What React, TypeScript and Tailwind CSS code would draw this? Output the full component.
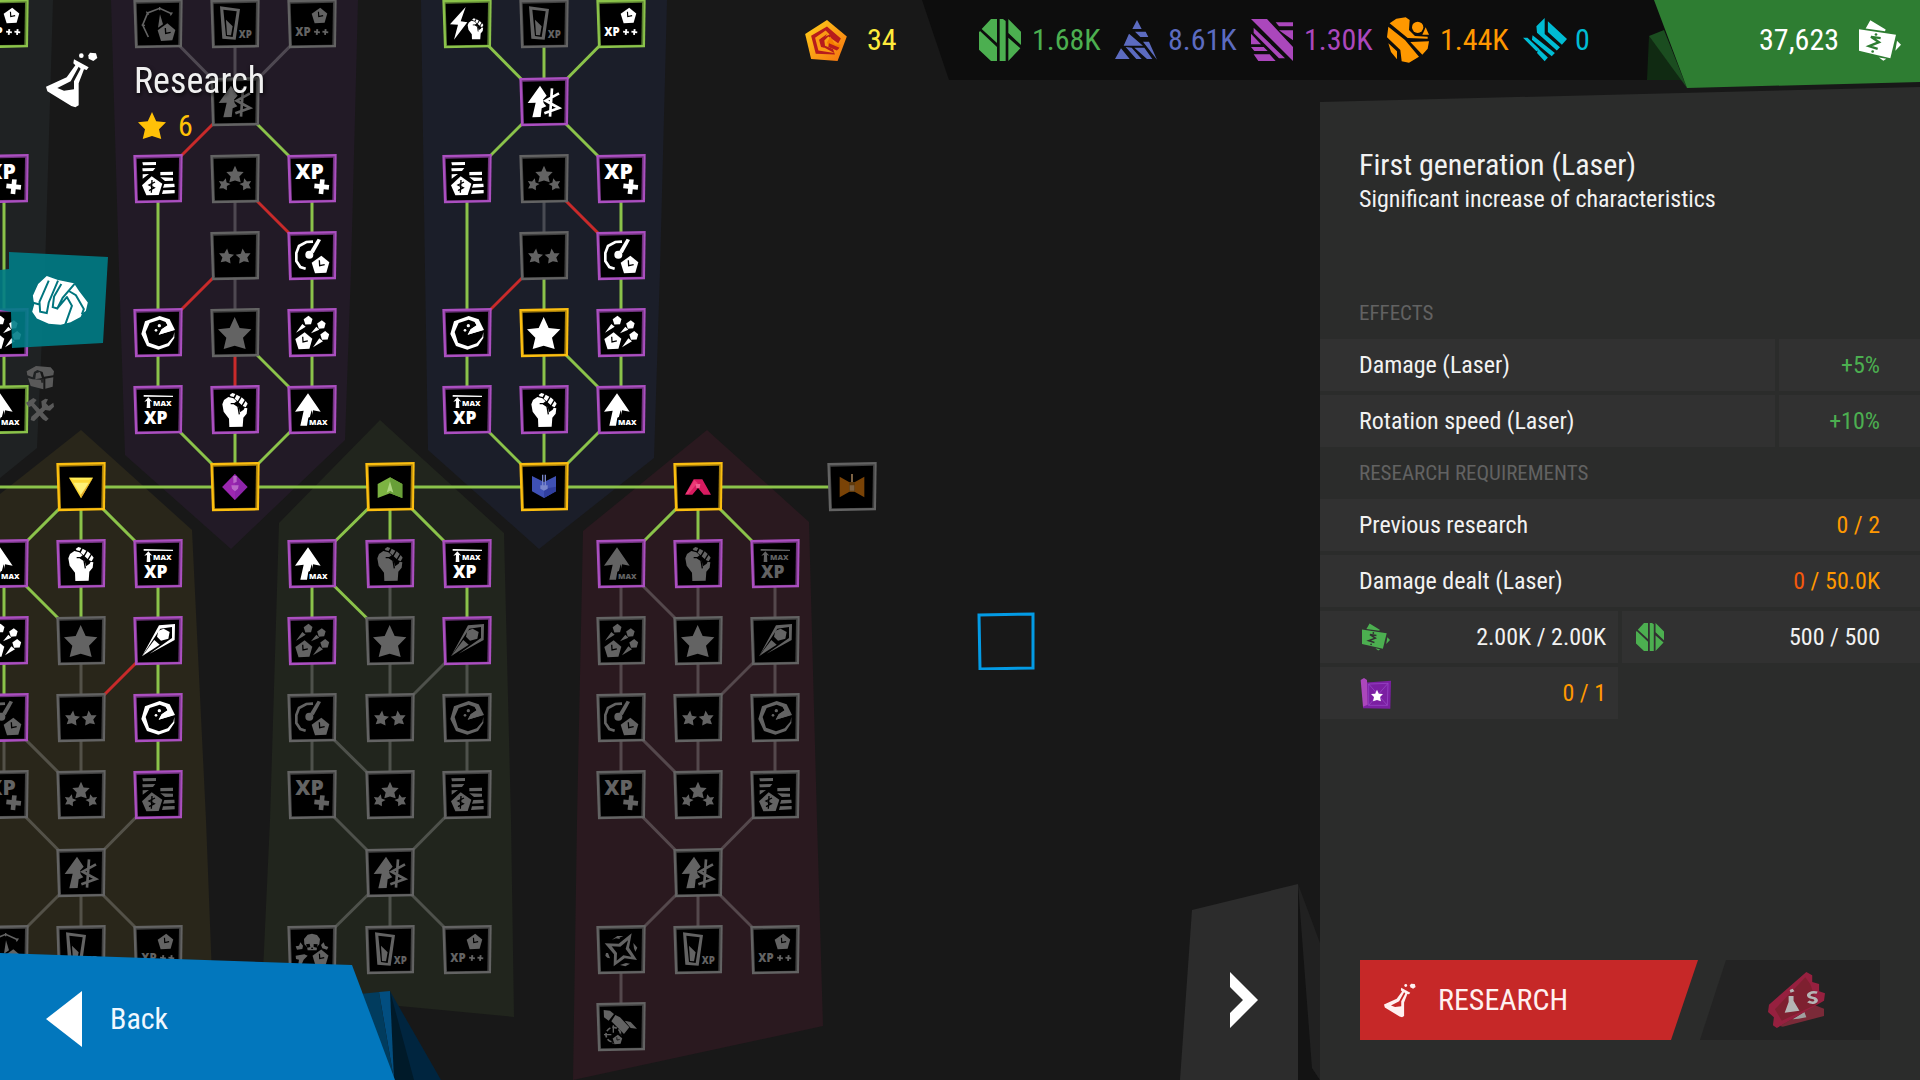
import type { ReactNode } from "react";

type Tone = "gray" | "purple" | "yellow" | "green";
type Link = [number, number, number, number, "g" | "r" | "d"];
type NodeDef = { c: number; r: number; icon: string; tone: Tone; lit?: boolean };

const STEP = 77.1;
const px = (c: number) => Math.round(4 + STEP * c);
const py = (r: number) => Math.round(487 + STEP * r);

const TONES: Record<Tone, string> = {
  gray: "#636363",
  purple: "#ab4fc0",
  yellow: "#fcbf10",
  green: "#8bc34a",
};

const STAR = "M0 -50 L15 -17 L50 -13 L25 12 L33 46 L0 36 L-33 46 L-25 12 L-50 -13 L-15 -17Z";
const PENTA = "M3 -26 L27 -6 L18 25 L-16 27 L-26 -5Z";

function Clock({ x, y, s = 1 }: { x: number; y: number; s?: number }) {
  return (
    <g transform={`translate(${x} ${y}) scale(${s})`}>
      <path d={PENTA} />
      <path d="M-3 -12 L-2 4 L13 1" fill="none" stroke="#000" strokeWidth="4" />
    </g>
  );
}

function Fist() {
  return (
    <g>
      <path d="M37 58 L42 45 L55 36 L70 40 L80 49 L70 56 L86 65 L90 82 L101 74 L104 68 L112 70 L110 86 L100 98 L98 125 L58 126 L57 101 L41 80Z" />
      <path d="M62 56 L72 56 L84 64 L88 88" fill="none" stroke="#000" strokeWidth="4" />
      <path d="M59 30 L67 24 L76 27 L71 36 L62 34Z M80 29 L91 35 L83 49 L74 41Z M95 37 L104 45 L95 60 L86 52Z M107 48 L113 56 L107 67 L98 63Z" />
    </g>
  );
}

function Label({ x, y, size, children }: { x: number; y: number; size: number; children: string }) {
  return (
    <text x={x} y={y} fontSize={size} fontWeight={800} fontFamily='"Open Sans", "Noto Sans", sans-serif'>
      {children}
    </text>
  );
}

function Plus({ x, y, s }: { x: number; y: number; s: number }) {
  return (
    <path
      transform={`translate(${x} ${y}) scale(${s}) rotate(6)`}
      d="M-7 -22 L7 -22 L7 -7 L22 -7 L22 7 L7 7 L7 22 L-7 22 L-7 7 L-22 7 L-22 -7 L-7 -7Z"
    />
  );
}

const GLYPHS: Record<string, ReactNode> = {
  star: <path d={STAR} transform="translate(74 77)" />,
  star2: (
    <g>
      <path d={STAR} transform="translate(49 75) scale(.45) rotate(6)" />
      <path d={STAR} transform="translate(100 75) scale(.45) rotate(-6)" />
    </g>
  ),
  star3: (
    <g>
      <path d={STAR} transform="translate(75 61) scale(.52)" />
      <path d={STAR} transform="translate(43 90) scale(.36) rotate(14)" />
      <path d={STAR} transform="translate(107 90) scale(.36) rotate(-14)" />
    </g>
  ),
  fist: <Fist />,
  power: (
    <g>
      <path d="M71 24 L24 76 L48 77 L36 122 L76 70 L56 67Z" />
      <g transform="translate(54 43) scale(.62)">
        <Fist />
      </g>
    </g>
  ),
  coins: (
    <g>
      <path d="M28 25 L69 24 L69 33 L30 34Z M28 43 L67 42 L60 51 L29 52Z M29 61 L48 60 L29 74Z" />
      <path d="M82 54 L120 53 L120 63 L82 64Z M82 70 L120 71 L120 80 L96 81Z M94 90 L124 89 L125 99 L90 101Z M90 109 L125 108 L125 118 L87 120Z" />
      <path d="M56 67 L88 89 L77 123 L40 124 L27 94Z" />
      <path d="M66 84 L48 93 L64 101 L48 110 M57 78 L55 116" fill="none" stroke="#000" strokeWidth="4" />
    </g>
  ),
  xpplus: (
    <g>
      <Label x={25} y={75} size={63}>XP</Label>
      <Plus x={104} y={98} s={1} />
    </g>
  ),
  maxxp: (
    <g>
      <path d="M32 30 L120 32 L120 36 L32 35Z" />
      <path d="M46 37 L58 50 L51 48 L52 69 L41 69 L42 48 L34 50Z" />
      <Label x={60} y={63} size={23}>MAX</Label>
      <Label x={33} y={118} size={52}>XP</Label>
    </g>
  ),
  upmax: (
    <g>
      <path d="M63 25 L101 80 L78 76 L76 92 L64 98 L60 122 L40 122 L50 77 L24 80Z" />
      <path d="M74 76 L82 106 L66 106Z" fill="#000" />
      <Label x={66} y={120} size={23}>MAX</Label>
    </g>
  ),
  bite: (
    <g>
      <path d="M80 24 L110 34 L126 66 L77 80 L86 64 L104 52 L98 42 L80 35 L50 45 L38 72 L48 104 L78 115 L104 106 L121 86 L124 72 L124 90 L108 114 L76 125 L42 114 L25 78 L36 40Z" />
      <path d="M98 42 L104 52 L86 64 L77 80 L122 66 L110 38Z" />
      <circle cx="79" cy="53" r="5" />
      <circle cx="69" cy="67" r="4" />
    </g>
  ),
  gauge: (
    <g>
      <path d="M78 32 L58 33 L36 45 L28 66 L28 90 L40 108 L56 113" fill="none" stroke="currentColor" strokeWidth="8" />
      <path d="M102 27 L92 23 L70 60 L80 67Z" />
      <circle cx="67" cy="71" r="12" />
      <Clock x={100} y={100} />
    </g>
  ),
  volley: (
    <g>
      <path d={PENTA} transform="translate(63 36) scale(.5)" />
      <path d={PENTA} transform="translate(103 49) scale(.48)" />
      <path d={PENTA} transform="translate(113 82) scale(.5)" />
      <path d="M27 74 L46 48 L56 56Z M72 76 L88 56 L97 65Z M78 118 L97 91 L108 100Z" />
      <Clock x={50} y={98} s={0.96} />
    </g>
  ),
  spear: (
    <g>
      <path d="M126 24 L78 28 L27 121 L82 38 L117 33 L117 66 L50 113 L125 72Z" />
      <path d="M92 38 L110 48 L106 68 L84 74 L72 62 L76 44Z" />
      <path d="M27 121 L64 72 L80 86Z" />
    </g>
  ),
  trade: (
    <g>
      <path d="M63 26 L83 56 L72 68 L74 78 L82 88 L68 94 L65 120 L40 121 L50 77 L26 78Z" />
      <path d="M120 49 L80 71 L120 93 L76 109 M99 34 L93 119" fill="none" stroke="currentColor" strokeWidth="8" />
    </g>
  ),
  glass: (
    <g>
      <path d="M30 22 L90 30 L77 122 L37 119Z M40 32 L48 111 L68 114 L80 37Z" fillRule="evenodd" />
      <path d="M48 62 L68 82 L63 109 L51 108Z" />
      <Label x={86} y={116} size={29}>XP</Label>
    </g>
  ),
  xppp: (
    <g>
      <Clock x={97} y={49} s={0.88} />
      <Label x={25} y={110} size={34}>XP</Label>
      <Plus x={90} y={99} s={0.4} />
      <Plus x={115} y={99} s={0.4} />
    </g>
  ),
  timer: (
    <g>
      <path d="M46 114 L29 78 L44 42 L80 28 L116 44" fill="none" stroke="currentColor" strokeWidth="5" />
      <path d="M26 78 L36 79 M40 38 L47 47 M80 24 L80 34 M118 40 L112 49" fill="none" stroke="currentColor" strokeWidth="4" />
      <path d="M81 46 L90 76 L75 86Z" />
      <Clock x={100} y={99} />
    </g>
  ),
  skull: (
    <g>
      <path d="M62 29 L75 26 L90 30 L99 42 L97 58 L90 66 L89 76 L62 76 L60 66 L52 58 L51 42Z" />
      <path d="M57 58 L68 56 L70 66 L61 68Z M80 57 L92 58 L90 68 L80 66Z M75 66 L79 72 L72 72Z" fill="#000" />
      <path d="M40 52 L48 62 L46 72 L30 74 L26 64 L36 62Z M110 52 L102 60 L106 70 L120 74 L124 66 L114 62Z M26 92 L52 88 L62 92 L50 104 L44 118 L34 116 L36 104 L27 102Z" />
      <Clock x={100} y={97} s={0.9} />
    </g>
  ),
  swirl: (
    <g>
      <path
        d="M107 25 L99 68 L123 105 L86 100 L53 124 L54 88 L26 55 L68 56Z M96 46 L73 65 L47 64 L63 84 L62 107 L82 91 L106 95 L89 72Z"
        fillRule="evenodd"
      />
      <path d="M48 44 L64 33 L82 33 L70 38 L72 42 L60 40Z M112 54 L124 68 L118 80 L114 70Z M36 84 L42 100 L34 98 L28 92 L30 84Z M72 120 L90 114 L102 116 L88 124Z" />
    </g>
  ),
  rocket: (
    <g>
      <path d="M23 24 L42 26 L54 36 L38 56 L24 46Z M58 39 L72 46 L100 76 L84 96 L46 58Z M86 56 L104 60 L123 80 L104 78Z" />
      <circle cx="52" cy="98" r="22" fill="none" stroke="currentColor" strokeWidth="5" strokeDasharray="14 6" />
      <path d="M52 70 L52 92 M24 98 L46 98 M52 104 L52 126" stroke="currentColor" strokeWidth="4" />
      <circle cx="64" cy="112" r="17" fill="#000" />
      <Clock x={64} y={112} s={0.54} />
    </g>
  ),
  gemYellow: (
    <g>
      <path d="M39 47 L111 47 L75 109Z" fill="#fdd835" />
      <path d="M39 47 L111 47 L98 53 L52 53Z" fill="#ffee58" />
      <path d="M52 62 L98 62 L75 98Z" fill="#fff176" />
      <path d="M111 47 L75 109 L75 98Z" fill="#e0a82e" />
    </g>
  ),
  gemPurple: (
    <g>
      <path d="M75 36 L113 75 L75 114 L37 75Z" fill="#8e24aa" />
      <path d="M75 36 L75 114 L37 75Z" fill="#9c27b0" />
      <path d="M70 42 L80 42 L80 60 L70 64Z M64 70 L86 70 L84 80 L75 88 L66 80Z" fill="#ba68c8" />
    </g>
  ),
  gemGreen: (
    <g>
      <path d="M75 46 L112 66 L112 108 L75 94 L38 108 L38 66Z" fill="#7cb342" />
      <path d="M75 46 L112 66 L112 108 L75 94Z" fill="#689f38" />
      <path d="M75 58 L85 92 L75 86 L65 92Z" fill="#aed581" />
    </g>
  ),
  gemBlue: (
    <g>
      <path d="M39 42 L75 60 L111 42 L111 88 L75 108 L39 88Z" fill="#3f51b5" />
      <path d="M75 80 L111 74 L111 88 L75 108Z" fill="#303f9f" />
      <path d="M71 38 L71 72 M79 38 L79 72" stroke="#7986cb" strokeWidth="4" />
      <path d="M64 70 L86 70 L86 80 L75 86 L64 80Z" fill="#7986cb" />
    </g>
  ),
  gemPink: (
    <g>
      <path d="M62 52 L88 52 L114 98 L92 98 L75 78 L58 98 L36 98Z" fill="#d81b60" />
      <path d="M64 54 L75 64 L66 72 L46 96 L38 96Z" fill="#ec3a76" />
      <path d="M68 66 L82 66 L80 78 L70 78Z" fill="#f06292" />
    </g>
  ),
  gemBrown: (
    <g>
      <path d="M38 44 L66 60 L84 60 L112 44 L112 106 L84 90 L66 90 L38 106Z" fill="#7a4306" />
      <path d="M66 60 L84 60 L84 90 L66 90Z" fill="#5f3a0c" />
      <path d="M72 36 L78 36 L78 60 L72 60Z M68 70 L82 70 L82 86 L68 86Z" fill="#7d6243" />
    </g>
  ),
};

const n = (c: number, r: number, icon: string, tone: Tone = "gray", lit = false): NodeDef => ({ c, r, icon, tone, lit });

const NODES: NodeDef[] = [
  n(0, -6, "xppp", "green", true), n(0, -4, "xpplus", "purple", true), n(0, -2, "volley", "purple", true), n(0, -1, "upmax", "green", true),
  n(2, -6, "timer"), n(3, -6, "glass"), n(4, -6, "xppp"),
  n(3, -5, "trade"),
  n(2, -4, "coins", "purple", true), n(3, -4, "star3"), n(4, -4, "xpplus", "purple", true),
  n(3, -3, "star2"), n(4, -3, "gauge", "purple", true),
  n(2, -2, "bite", "purple", true), n(3, -2, "star"), n(4, -2, "volley", "purple", true),
  n(2, -1, "maxxp", "purple", true), n(3, -1, "fist", "purple", true), n(4, -1, "upmax", "purple", true),
  n(6, -6, "power", "green", true), n(7, -6, "glass"), n(8, -6, "xppp", "green", true),
  n(7, -5, "trade", "purple", true),
  n(6, -4, "coins", "purple", true), n(7, -4, "star3"), n(8, -4, "xpplus", "purple", true),
  n(7, -3, "star2"), n(8, -3, "gauge", "purple", true),
  n(6, -2, "bite", "purple", true), n(7, -2, "star", "yellow", true), n(8, -2, "volley", "purple", true),
  n(6, -1, "maxxp", "purple", true), n(7, -1, "fist", "purple", true), n(8, -1, "upmax", "purple", true),
  n(1, 0, "gemYellow", "yellow"), n(3, 0, "gemPurple", "yellow"), n(5, 0, "gemGreen", "yellow"),
  n(7, 0, "gemBlue", "yellow"), n(9, 0, "gemPink", "yellow"), n(11, 0, "gemBrown"),
  n(0, 1, "upmax", "purple", true), n(1, 1, "fist", "purple", true), n(2, 1, "maxxp", "purple", true),
  n(0, 2, "volley", "purple", true), n(1, 2, "star"), n(2, 2, "spear", "purple", true),
  n(0, 3, "gauge", "purple"), n(1, 3, "star2"), n(2, 3, "bite", "purple", true),
  n(0, 4, "xpplus"), n(1, 4, "star3"), n(2, 4, "coins", "purple"),
  n(1, 5, "trade"), n(0, 6, "timer"), n(1, 6, "glass"), n(2, 6, "xppp"),
  n(4, 1, "upmax", "purple", true), n(5, 1, "fist", "purple"), n(6, 1, "maxxp", "purple", true),
  n(4, 2, "volley", "purple"), n(5, 2, "star"), n(6, 2, "spear", "purple"),
  n(4, 3, "gauge"), n(5, 3, "star2"), n(6, 3, "bite"),
  n(4, 4, "xpplus"), n(5, 4, "star3"), n(6, 4, "coins"),
  n(5, 5, "trade"), n(4, 6, "skull"), n(5, 6, "glass"), n(6, 6, "xppp"),
  n(8, 1, "upmax", "purple"), n(9, 1, "fist", "purple"), n(10, 1, "maxxp", "purple"),
  n(8, 2, "volley"), n(9, 2, "star"), n(10, 2, "spear"),
  n(8, 3, "gauge"), n(9, 3, "star2"), n(10, 3, "bite"),
  n(8, 4, "xpplus"), n(9, 4, "star3"), n(10, 4, "coins"),
  n(9, 5, "trade"), n(8, 6, "swirl"), n(9, 6, "glass"), n(10, 6, "xppp"), n(8, 7, "rocket"),
];

const LINKS: Link[] = [
  [-1, 0, 11, 0, "g"], [0, -4, 0, -1, "g"], [0, -6, -1, -5, "g"],
  [2, -6, 3, -5, "d"], [3, -6, 3, -5, "d"], [4, -6, 3, -5, "d"], [3, -5, 2, -4, "r"], [3, -5, 4, -4, "g"],
  [2, -4, 2, -1, "g"], [4, -4, 4, -1, "g"], [3, -4, 3, -2, "d"], [3, -4, 4, -3, "r"], [3, -3, 2, -2, "r"],
  [3, -2, 3, -1, "r"], [3, -2, 4, -1, "g"], [2, -1, 3, 0, "g"], [3, -1, 3, 0, "g"], [4, -1, 3, 0, "g"],
  [6, -6, 7, -5, "g"], [7, -6, 7, -5, "g"], [8, -6, 7, -5, "g"], [7, -5, 6, -4, "g"], [7, -5, 8, -4, "g"],
  [6, -4, 6, -1, "g"], [8, -4, 8, -1, "g"], [7, -4, 7, -3, "d"], [7, -3, 7, -1, "g"], [7, -4, 8, -3, "r"],
  [7, -3, 6, -2, "r"], [7, -2, 8, -1, "g"], [6, -1, 7, 0, "g"], [7, -1, 7, 0, "g"], [8, -1, 7, 0, "g"],
  [1, 0, 0, 1, "g"], [1, 0, 1, 2, "g"], [1, 0, 2, 1, "g"], [0, 1, 0, 3, "g"], [0, 1, 1, 2, "g"], [2, 1, 2, 4, "g"],
  [2, 2, 1, 3, "r"], [1, 2, 1, 4, "d"], [0, 3, 0, 4, "d"], [0, 3, 1, 4, "d"], [0, 4, 1, 5, "d"], [2, 4, 1, 5, "d"],
  [1, 5, 0, 6, "d"], [1, 5, 1, 6, "d"], [1, 5, 2, 6, "d"],
  [5, 0, 4, 1, "g"], [5, 0, 5, 1, "g"], [5, 0, 6, 1, "g"], [4, 1, 4, 2, "g"], [4, 1, 5, 2, "g"], [6, 1, 6, 2, "g"],
  [5, 1, 5, 4, "d"], [4, 2, 4, 4, "d"], [6, 2, 6, 4, "d"], [6, 2, 5, 3, "d"], [4, 3, 5, 4, "d"],
  [4, 4, 5, 5, "d"], [6, 4, 5, 5, "d"], [5, 5, 4, 6, "d"], [5, 5, 5, 6, "d"], [5, 5, 6, 6, "d"],
  [9, 0, 8, 1, "g"], [9, 0, 9, 1, "g"], [9, 0, 10, 1, "g"], [8, 1, 8, 4, "d"], [8, 1, 9, 2, "d"], [9, 1, 9, 4, "d"],
  [10, 1, 10, 4, "d"], [10, 2, 9, 3, "d"], [8, 3, 9, 4, "d"], [8, 4, 9, 5, "d"], [10, 4, 9, 5, "d"],
  [9, 5, 8, 6, "d"], [9, 5, 9, 6, "d"], [9, 5, 10, 6, "d"], [8, 6, 8, 7, "d"],
];

const LINK_COLOR = { g: "#8bc34a", r: "#c92a2a", d: "rgba(200,200,200,0.27)" };

const REGIONS: [string, string][] = [
  ["0,0 53,0 45,270 37,448 0,478", "#1f2223"],
  ["111,0 358,0 351,270 345,440 231,549 125,455 119,270", "#221a26"],
  ["421,0 667,0 660,270 654,458 539,549 428,450 425,270", "#1b1e29"],
  ["81,430 192,530 206,820 216,1080 0,1080 0,494", "#29261a"],
  ["380,420 504,533 511,820 514,1017 262,993 270,820 279,523", "#21251d"],
  ["707,430 809,522 817,820 823,1026 573,1080 577,820 583,531", "#2a191f"],
];

function TreeNode({ node }: { node: NodeDef }) {
  return (
    <button
      className="absolute size-[50px] cursor-pointer"
      aria-label={node.icon}
      style={{ left: px(node.c) - 25, top: py(node.r) - 25 }}
    >
      <svg viewBox="0 0 150 150" className="size-full">
        <path d="M1 3 L149 0 L147 145 L6 148Z" fill={TONES[node.tone]} />
        <path d="M8 10 L143 7 L141 138 L13 141Z" fill="#000" fillOpacity="0.35" />
        <path d="M11 14 L138 11 L136 137 L15 139Z" fill="#000" />
        <g className={node.lit ? "text-white" : "text-[#636363]"} fill="currentColor">
          {GLYPHS[node.icon]}
        </g>
      </svg>
    </button>
  );
}

function ResearchTree() {
  return (
    <div className="absolute inset-0 overflow-hidden">
      <svg className="absolute left-0 top-0 h-[1080px] w-[1320px]" viewBox="0 0 1320 1080">
        {REGIONS.map(([points, fill]) => (
          <polygon key={points} points={points} fill={fill} />
        ))}
        {LINKS.map(([a, b, c, d, k]) => (
          <line key={`${a},${b},${c},${d}`} x1={px(a)} y1={py(b)} x2={px(c)} y2={py(d)} stroke={LINK_COLOR[k]} strokeWidth="3" />
        ))}
      </svg>
      {NODES.map((node) => (
        <TreeNode key={`${node.c},${node.r}`} node={node} />
      ))}
      <button
        aria-label="Selected research"
        className="absolute size-[58px]"
        style={{ left: px(13) - 29, top: py(2) - 29 }}
      >
        <svg viewBox="0 0 58 58" className="size-full">
          <path d="M2 3 L56 2 L56 56 L3 57Z" fill="none" stroke="#039be5" strokeWidth="3" />
        </svg>
      </button>
    </div>
  );
}

function FlaskIcon({ className }: { className: string }) {
  return (
    <svg viewBox="0 0 156 168" className={className} fill="currentColor">
      <path
        fillRule="evenodd"
        d="M84 22 L128 46 L122 54 L114 52 L98 94 L98 160 L88 166 L76 162 L4 118 L0 104 L62 76 L88 40 L82 34Z M98 44 L74 88 L34 108 L54 116 L84 112 L84 88 L104 50Z"
      />
      <circle cx="106" cy="11" r="7" />
      <path d="M132 2 L150 4 L154 18 L142 27 L128 20 L127 10Z" />
    </svg>
  );
}

function CashIcon({ className, ink }: { className: string; ink: string }) {
  return (
    <svg viewBox="0 0 126 122" className={className} fill="currentColor">
      <path d="M34 0 L80 28 L78 33 L20 25Z M114 62 L126 74 L109 92Z M60 112 L82 116 L73 122Z" />
      <path d="M0 27 L111 44 L94 114 L0 92Z" />
      <path d="M65 54 L36 50 L60 66 L30 78 L56 86" fill="none" stroke={ink} strokeWidth="7" />
      <circle cx="51" cy="43" r="4" fill={ink} />
      <circle cx="41" cy="94" r="4" fill={ink} />
    </svg>
  );
}

function GreenOre({ className }: { className: string }) {
  return (
    <svg viewBox="0 0 126 126" className={className} fill="currentColor">
      <path d="M36 0 L54 0 L54 72 L8 30Z M3 36 L54 84 L54 126 L36 126 L0 92 L0 40Z M62 0 L72 0 L80 6 L80 126 L62 126Z M88 0 L126 38 L126 78 L88 42Z M88 56 L124 88 L88 126Z" />
    </svg>
  );
}

const CURRENCIES: { amount: string; color: string; icon: ReactNode }[] = [
  { amount: "1.68K", color: "text-[#4caf50]", icon: <GreenOre className="size-[42px]" /> },
  {
    amount: "8.61K",
    color: "text-[#5c6bc0]",
    icon: (
      <svg viewBox="0 0 126 126" className="size-[42px]" fill="currentColor">
        <path d="M66 3 L80 30 L52 30Z M60 38 L92 38 L100 54 L76 54Z M42 44 L84 80 L26 80Z M84 68 L102 68 L126 122Z M58 86 L88 86 L112 120 L96 120Z M32 84 L50 86 L80 120 L64 120Z M18 88 L44 120 L0 120Z" />
      </svg>
    ),
  },
  {
    amount: "1.30K",
    color: "text-[#ab47bc]",
    icon: (
      <svg viewBox="0 0 126 126" className="size-[42px]" fill="currentColor">
        <path d="M0 0 L48 0 L126 84 L126 126Z M8 26 L102 118 L84 118 L8 42Z M0 44 L30 76 L0 76Z M0 84 L38 84 L50 96 L10 96Z M8 106 L56 106 L74 126 L22 126Z M74 10 L126 10 L126 22 L84 22Z M84 34 L126 34 L126 64Z" />
      </svg>
    ),
  },
  {
    amount: "1.44K",
    color: "text-[#ff9800]",
    icon: (
      <svg viewBox="0 0 126 136" className="h-[46px] w-[42px]" fill="currentColor">
        <path d="M56 0 L68 8 L66 38 L84 56 L122 58 L122 64 L62 62 L8 18 L28 4Z M4 28 L54 68 L96 118 L66 136 L44 132 L40 98 L0 60Z M70 74 L126 72 L122 94 L106 112Z M4 78 L30 102 L30 126 L12 104Z" />
        <path d="M116 30 L126 52 L106 52Z" />
        <circle cx="92" cy="30" r="17" />
      </svg>
    ),
  },
  {
    amount: "0",
    color: "text-[#00bcd4]",
    icon: (
      <svg viewBox="0 0 138 138" className="size-[44px]" fill="currentColor">
        <path d="M68 0 L68 50 L116 92 L106 102 L44 46 L42 26Z M78 10 L138 66 L122 84 L78 44Z M30 54 L100 110 L90 120 L28 68Z M0 62 L14 62 L52 98 L42 104Z M48 96 L78 124 L68 136 L44 110Z" />
      </svg>
    ),
  },
];

function TopBar() {
  return (
    <header className="relative z-10 flex h-[87px] items-start justify-between text-[30px] leading-9">
      <div className="flex items-start pl-[46px] pt-[52px]">
        <FlaskIcon className="h-[56px] w-[52px] text-white" />
        <div className="ml-9 flex flex-col">
          <h1 className="text-[36px] leading-[58px] text-[#f0f0f0] drop-shadow-[1px_2px_2px_rgba(0,0,0,0.8)]">Research</h1>
          <div className="-mt-[2px] flex items-center gap-3 pl-1 text-[#ffc107]">
            <svg viewBox="-50 -50 100 100" className="size-[28px]" fill="currentColor">
              <path d={STAR} />
            </svg>
            <span>6</span>
          </div>
        </div>
      </div>
      <div className="flex items-start">
        <div className="flex h-20 w-[117px] items-center gap-5 text-[#ffeb3b]">
          <svg viewBox="0 0 126 124" className="h-[41px] w-[42px]">
            <defs>
              <linearGradient id="gem" x1="0" y1="0" x2="1" y2="1">
                <stop offset="0" stopColor="#ffd21a" />
                <stop offset="1" stopColor="#f57010" />
              </linearGradient>
            </defs>
            <path d="M66 0 L126 50 L98 124 L18 118 L0 42Z" fill="url(#gem)" />
            <path d="M66 20 L108 56 L100 70 L70 50 L58 62 L60 78 L84 88 L90 104 L32 102 L18 48Z" fill="#b71c1c" />
            <path d="M62 32 L74 44 L48 56 L52 80 L88 100 L40 92 L30 54Z" fill="#fb9a14" />
            <path d="M66 42 L42 60 L48 82 L58 84 L52 66Z" fill="#b71c1c" />
            <path d="M76 50 L66 68 L74 84 L100 90 L108 74 L90 74Z" fill="#f57c00" />
            <path d="M72 70 L104 84 L96 92 L70 82Z" fill="#b71c1c" />
          </svg>
          <span>34</span>
        </div>
        <div className="-mr-[40px] flex h-20 items-center bg-[#0d0d0d] pl-[57px] pr-[40px] [clip-path:polygon(0_0,100%_0,100%_100%,27px_100%)]">
          {CURRENCIES.map((c) => (
            <div key={c.amount} className={`flex w-[136px] items-center gap-[11px] last:w-[124px] last:gap-2 ${c.color}`}>
              {c.icon}
              <span>{c.amount}</span>
            </div>
          ))}
        </div>
        <button className="relative flex h-[88px] w-[273px] items-start justify-end">
          <span className="absolute inset-0 bg-[#102a12] [clip-path:polygon(2px_36px,40px_86px,40px_80px,0_80px)]" />
          <span className="absolute inset-0 bg-[#1b4d20] [clip-path:polygon(2px_36px,17px_30px,40px_88px)]" />
          <span className="absolute inset-0 bg-[#2e7d32] [clip-path:polygon(7px_0,100%_0,100%_82px,40px_88px)]" />
          <span className="relative flex h-20 items-center gap-5 pr-[19px] text-white">
            37,623
            <CashIcon className="h-[41px] w-[42px]" ink="#2e7d32" />
          </span>
        </button>
      </div>
    </header>
  );
}

function SideTab() {
  return (
    <div className="absolute left-0 top-[252px] flex flex-col items-start">
      <button
        aria-label="Abilities"
        className="flex h-24 w-[108px] items-center justify-center bg-[#007c86]/90 pl-3 [clip-path:polygon(9px_0,100%_5px,103px_91px,12px_100%,11px_60px,0_58px,0_18px,9px_17px)]"
      >
        <svg viewBox="0 0 168 148" className="h-[49px] w-[56px]">
          <path
            d="M2 60 L18 24 L44 0 L78 12 L126 22 L142 46 L168 80 L162 106 L152 112 L146 124 L116 140 L86 147 L50 144 L14 128 L0 108 L6 86Z"
            fill="#fff"
          />
          <path
            d="M50 14 L22 78 L24 108 L44 112 L50 80 L78 14 M88 24 L66 62 L62 94 L76 98 L92 66 L128 24 M0 80 L22 86 M104 62 L120 90 L100 146 M112 46 L132 58 L156 100 L150 116 M106 62 L74 100"
            fill="none"
            stroke="#00757e"
            strokeWidth="6"
          />
        </svg>
      </button>
      <div className="ml-[26px] mt-[18px] flex flex-col gap-2 text-[#595959]">
        <svg viewBox="0 0 84 72" className="h-6 w-7" fill="currentColor">
          <path d="M2 16 L30 0 L74 4 L84 16 L82 28 L54 32 L50 18 L34 12 L24 18 L20 34 L4 28Z M28 36 L30 22 L42 18 L48 36 L28 40Z M6 36 L20 40 L52 42 L52 70 L14 60Z M58 38 L82 34 L80 62 L58 68Z" />
          <path d="M44 38 L54 38 L54 50 L46 50Z" fill="#262626" />
        </svg>
        <svg viewBox="0 0 84 72" className="h-6 w-7" fill="currentColor">
          <path d="M0 14 L22 0 L32 6 L24 16 L60 54 L68 62 L60 70 L50 64 L16 24 L8 28Z" />
          <path d="M46 10 L58 2 L66 4 L60 16 L68 24 L82 14 L84 26 L72 38 L58 36 L24 70 L14 66 L16 56 L48 28Z" />
        </svg>
      </div>
    </div>
  );
}

function BackButton() {
  return (
    <div className="absolute bottom-0 left-0 h-[127px] w-[441px]">
      <span className="absolute inset-0 bg-[#00253f] [clip-path:polygon(390px_38px,441px_100%,394px_100%)]" />
      <span className="absolute inset-0 bg-[#001a29] [clip-path:polygon(390px_38px,414px_100%,394px_100%)]" />
      <span className="absolute inset-0 bg-[#024e80] [clip-path:polygon(379px_39px,390px_38px,394px_100%)]" />
      <span className="absolute inset-0 bg-[#013c5e] [clip-path:polygon(360px_41px,379px_39px,394px_100%)]" />
      <button className="relative flex h-full w-[395px] items-center gap-7 bg-[#0277bd] pl-[46px] pt-1 text-[30px] leading-9 text-[#f0f8ff] [clip-path:polygon(0_0,352px_12px,100%_100%,0_100%)]">
        <svg viewBox="0 0 36 56" className="h-14 w-9" fill="#fff">
          <path d="M0 28 L36 0 L36 56Z" />
        </svg>
        Back
      </button>
    </div>
  );
}

function CollapseTab() {
  return (
    <div className="absolute bottom-0 right-full h-[196px] w-[140px]">
      <span className="absolute inset-0 bg-[#131313] [clip-path:polygon(118px_0,132px_184px,100%_100%,118px_100%)]" />
      <span className="absolute inset-0 bg-[#212121] [clip-path:polygon(118px_0,100%_59px,100%_100%,132px_184px)]" />
      <button
        aria-label="Collapse panel"
        className="relative flex h-full w-[118px] items-center justify-center bg-[#2c2c2c] pl-[10px] pt-9 [clip-path:polygon(12px_26px,100%_0,100%_100%,0_100%)]"
      >
        <svg viewBox="0 0 28 56" className="h-14 w-7" fill="#fff">
          <path d="M0 0 L28 28 L0 56 L0 41 L13 28 L0 15Z" />
        </svg>
      </button>
    </div>
  );
}

function DetailsPanel() {
  return (
    <div className="relative ml-auto flex w-[600px] flex-1 flex-col">
      <CollapseTab />
      <aside className="flex flex-1 flex-col bg-[#2b2c2b] text-[24px] leading-7 text-[#f2f2f2] [clip-path:polygon(0_15px,100%_0,100%_100%,0_100%)]">
        <div className="h-[200px] pl-[39px] pt-[58px]">
          <h2 className="text-[30px] leading-10">First generation (Laser)</h2>
          <p>Significant increase of characteristics</p>
        </div>
        <h3 className="flex h-[52px] items-center pl-[39px] text-[21px] text-[#626262]">EFFECTS</h3>
        <dl className="flex flex-col gap-1">
          {[
            ["Damage (Laser)", "+5%"],
            ["Rotation speed (Laser)", "+10%"],
          ].map(([name, value]) => (
            <div key={name} className="flex h-[52px] gap-1">
              <dt className="flex flex-1 items-center bg-[#313131] pl-[39px]">{name}</dt>
              <dd className="flex w-[141px] items-center justify-end bg-[#313131] pr-10 text-[#4caf50]">{value}</dd>
            </div>
          ))}
        </dl>
        <h3 className="flex h-[52px] items-center pl-[39px] text-[21px] text-[#626262]">RESEARCH REQUIREMENTS</h3>
        <div className="flex flex-col gap-1">
          <div className="flex h-[52px] items-center justify-between bg-[#313131] pl-[39px] pr-10">
            <span>Previous research</span>
            <span className="text-[#ff9800]">0 / 2</span>
          </div>
          <div className="flex h-[52px] items-center justify-between bg-[#313131] pl-[39px] pr-10">
            <span>Damage dealt (Laser)</span>
            <span className="text-[#ff9800]">
              <span className="text-[#f4590c]">0</span> / 50.0K
            </span>
          </div>
          <div className="grid grid-cols-2 gap-1">
            <div className="flex h-[52px] items-center justify-between bg-[#313131] pl-[42px] pr-3">
              <CashIcon className="size-7 text-[#4caf50]" ink="#313131" />
              <span>2.00K / 2.00K</span>
            </div>
            <div className="flex h-[52px] items-center justify-between bg-[#313131] pl-[14px] pr-10">
              <GreenOre className="size-7 text-[#4caf50]" />
              <span>500 / 500</span>
            </div>
            <div className="flex h-[52px] items-center justify-between bg-[#313131] pl-10 pr-3">
              <svg viewBox="0 0 93 93" className="size-[31px]">
                <path d="M9 14 L93 8 L91 92 L9 91Z" fill="#7b1fa2" />
                <path d="M26 18 L84 16 L82 82 L26 82Z M26 18 L82 82 M84 16 L26 82" fill="none" stroke="#9c4dcc" strokeWidth="2" />
                <path d="M2 6 L12 0 L21 6 L23 80 L9 86Z" fill="#ab47bc" />
                <path d={STAR} transform="translate(51 53) scale(.36)" fill="#fff" />
              </svg>
              <span className="text-[#ff9800]">0 / 1</span>
            </div>
          </div>
        </div>
        <div className="mb-10 ml-10 mr-10 mt-auto flex h-20">
          <button className="flex w-[338px] items-center gap-[22px] bg-[#c62828] pl-6 text-[30px] leading-9 text-[#fff0f0] [clip-path:polygon(0_0,100%_0,311px_100%,0_100%)]">
            <FlaskIcon className="h-[35px] w-8" />
            RESEARCH
          </button>
          <button
            aria-label="Use research ticket"
            className="ml-[2px] flex flex-1 items-center justify-center bg-[#232323] pl-3 [clip-path:polygon(26px_0,100%_0,100%_100%,0_100%)]"
          >
            <svg viewBox="0 0 116 168" className="h-14 w-[57px]" preserveAspectRatio="none">
              <path d="M24 162 L96 100 L114 110 L114 132 L30 164Z" fill="#7a2a38" />
              <path d="M50 142 L74 120 L78 136 L62 140Z" fill="#a0a0a0" />
              <path d="M78 0 L90 10 L90 30 L104 36 L104 58 L116 64 L114 86 L18 168 L10 160 L12 136 L0 120 L2 98Z" fill="#96203f" />
              <path d="M76 16 L86 36 L100 96 L28 146 L14 112Z" fill="#7e2030" />
              <path d="M42 72 L52 72 L52 86 L64 116 L34 122 L42 90Z M44 54 L50 50 L54 58 L46 62Z" fill="#b5b5b5" />
              <path d="M100 62 C88 58 80 66 84 74 C90 80 98 76 98 86 C96 94 88 94 82 88" fill="none" stroke="#b5b5b5" strokeWidth="7" />
            </svg>
          </button>
        </div>
      </aside>
    </div>
  );
}

export default function App() {
  return (
    <div className='relative flex h-screen flex-col overflow-hidden bg-[#181818] [font-family:"Roboto_Condensed","Liberation_Sans_Narrow",Roboto,sans-serif]'>
      <ResearchTree />
      <TopBar />
      <DetailsPanel />
      <SideTab />
      <BackButton />
    </div>
  );
}
